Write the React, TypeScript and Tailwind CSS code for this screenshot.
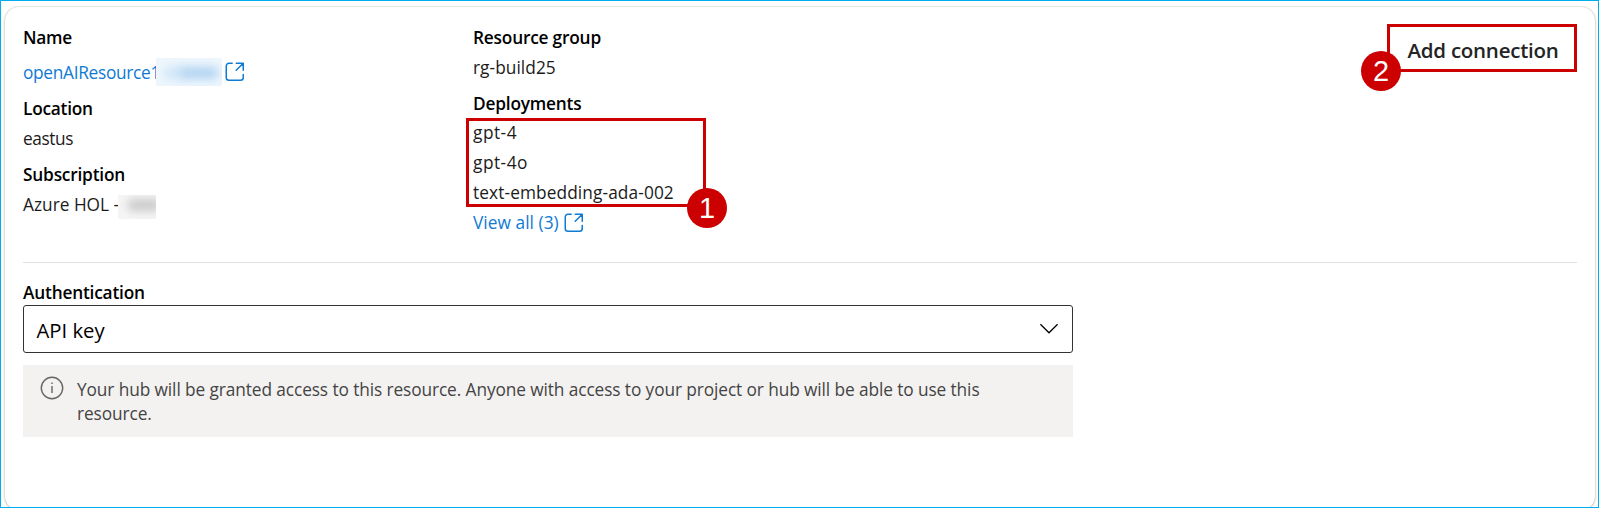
import type { ReactNode } from "react";

function OpenIcon() {
  return (
    <svg width="20" height="20" viewBox="0 0 20 20" fill="none" stroke="currentColor" strokeWidth="1.5" strokeLinecap="round" strokeLinejoin="round" className="mb-px shrink-0">
      <path d="M7.2 1.25H4A2.75 2.75 0 0 0 1.25 4V15.5A2.75 2.75 0 0 0 4 18.25H15.5A2.75 2.75 0 0 0 18.25 15.5V12.4" />
      <path d="M11.3 1.25H18.25V8.2M18.25 1.25L11.2 8.3" />
    </svg>
  );
}

function Badge({ children, className }: { children: ReactNode; className: string }) {
  return (
    <span className={`absolute flex size-10 items-center justify-center rounded-full bg-[#cc0000] pt-px font-['Liberation_Sans',sans-serif] text-[29px] leading-none font-normal tracking-normal text-white ${className}`}>
      {children}
    </span>
  );
}

export default function App() {
  return (
    <div className="h-[508px] w-[1599px] overflow-hidden border border-[#00adef] bg-white pt-1.5 pr-[3px] pl-1 font-['Open_Sans',sans-serif] text-[17.3px] leading-[30px] text-[#1b1b1b]">
      <main className="h-[503px] rounded-[14px] bg-white px-[18px] pt-4 shadow-[0_0_2px_rgba(0,0,0,0.25),0_1px_3px_rgba(0,0,0,0.18)]">
        <section className="flex h-[240px] items-start border-b border-[#e0e0e0]">
          <div className="w-[450px] whitespace-nowrap">
            <h2 className="font-semibold tracking-[-0.3px] text-black">Name</h2>
            <div className="mt-[5px] flex h-[30px] items-center text-[#0f7ad4]">
              <a className="w-[133px] tracking-[-0.3px]">openAIResource1</a>
              <span className="relative mb-[3px] h-7 w-[66px] overflow-hidden bg-[#eff7fd]">
                <span className="absolute top-[9px] left-2 h-3 w-5 rounded bg-[#cfe5f7] blur-[5px]" />
                <span className="absolute top-[9px] left-6 h-3 w-[38px] rounded bg-[#b0d3f1] blur-[5px]" />
              </span>
              <span className="mb-px ml-[3px]"><OpenIcon /></span>
            </div>
            <h2 className="mt-1.5 font-semibold tracking-[-0.25px] text-black">Location</h2>
            <p className="tracking-[-0.4px]">eastus</p>
            <h2 className="mt-1.5 font-semibold tracking-[-0.2px] text-black">Subscription</h2>
            <div className="flex items-start">
              <span className="w-[95px]">Azure HOL -</span>
              <span className="relative mt-[5px] h-6 w-[38px] overflow-hidden bg-[#f5f5f5]">
                <span className="absolute top-1 left-2.5 h-3 w-8 rounded bg-[#cbcbcb] blur-[4px]" />
              </span>
            </div>
          </div>
          <div className="whitespace-nowrap">
            <h2 className="font-semibold tracking-[-0.2px] text-black">Resource group</h2>
            <p className="tracking-[0.05px]">rg-build25</p>
            <h2 className="mt-1.5 font-semibold tracking-[-0.2px] text-black">Deployments</h2>
            <div className="relative -mt-px -ml-[7px] h-[89px] w-[240px] border-[3px] border-[#cc0000] pl-1">
              <ul className="-mt-[3px]">
                <li className="h-[30px] tracking-[0.5px]">gpt-4</li>
                <li className="h-[30px] tracking-[0.5px]">gpt-4o</li>
                <li className="h-[30px] tracking-[0.1px]">text-embedding-ada-002</li>
              </ul>
              <Badge className="-right-[24px] -bottom-[24px]">1</Badge>
            </div>
            <div className="mt-px flex items-center text-[#0f7ad4]">
              <a className="w-[91px] tracking-[0.05px]">View all (3)</a>
              <OpenIcon />
            </div>
          </div>
          <button className="relative mt-px ml-auto h-12 w-[190px] border-[3px] border-[#cc0000] pt-1 pl-0.5 text-[20.5px] font-semibold whitespace-nowrap text-[#242424]">
            <span className="tracking-[-0.25px]">Add connection</span>
            <Badge className="-bottom-[22px] -left-[29px]">2</Badge>
          </button>
        </section>
        <section className="w-[1050px] pt-[15px]">
          <h2 className="h-[27px] font-semibold tracking-[-0.2px] text-black">Authentication</h2>
          <div className="flex h-12 items-center justify-between rounded-[3px] border border-[#333] pr-[13px] pl-[12.5px] text-[20.3px] text-black">
            <span className="pt-0.5 tracking-[0px]">API key</span>
            <svg width="20" height="12" viewBox="0 0 20 12" fill="none" stroke="currentColor" strokeWidth="1.25"><path d="M1.4 1.2L10 9.8L18.6 1.2" /></svg>
          </div>
          <div className="mt-3 flex h-[72px] bg-[#f3f2f1] pt-[11px] pl-[17px] leading-6 text-[#444]">
            <svg width="24" height="24" viewBox="0 0 24 24" fill="none" stroke="#666" strokeWidth="1.4" className="shrink-0"><circle cx="12" cy="12" r="10.7" /><path d="M12 10V17M12 6.5V8" /></svg>
            <p className="pt-0.5 pl-[13px] tracking-[-0.1px] whitespace-nowrap">
              Your hub will be granted access to this resource. Anyone with access to your project or hub will be able to use this
              <br />
              resource.
            </p>
          </div>
        </section>
      </main>
    </div>
  );
}
